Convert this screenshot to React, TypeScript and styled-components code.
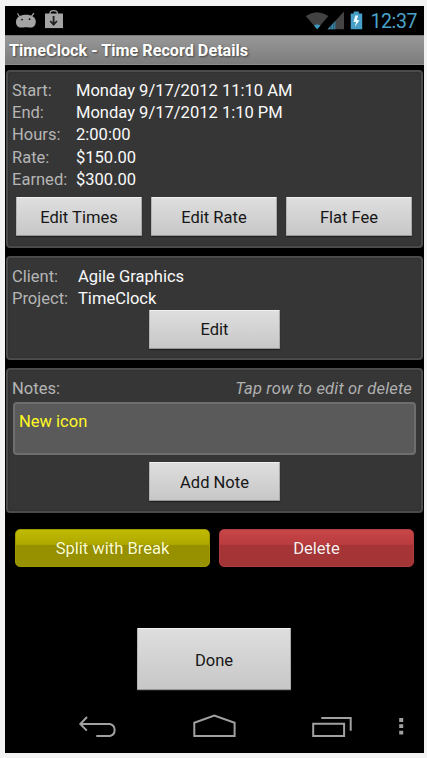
import React from "react";
import styled, { createGlobalStyle } from "styled-components";

const GlobalStyle = createGlobalStyle`
  * { box-sizing: border-box; }
  body { margin: 0; background: #f3f3f3; font-family: Roboto, "Liberation Sans", sans-serif; }
  button { font: inherit; border: 0; padding: 0; margin: 0; }
`;

const Page = styled.div`
  width: 427px;
  height: 758px;
  padding: 6px 3px 5px 5px;
  overflow: hidden;
`;

const Screen = styled.main`
  height: 747px;
  background: #000;
  display: flex;
  flex-direction: column;
  font-size: 16.55px;
  line-height: 22.2px;
`;

const StatusBar = styled.header`
  height: 29px;
  flex: none;
  display: flex;
  align-items: flex-start;
  justify-content: space-between;
  padding: 0 7px 0 10px;
`;

const Clock = styled.time`
  color: #4ba3c9;
  font-size: 19.5px;
  line-height: 31px;
  letter-spacing: -0.4px;
  margin-left: 7px;
`;

const StatusGroup = styled.div`
  display: flex;
  height: 29px;
`;

const TitleBar = styled.h1`
  height: 30px;
  flex: none;
  margin: 0;
  padding-left: 4px;
  font-size: 16.2px;
  line-height: 30px;
  font-weight: 700;
  color: #fff;
  text-shadow: 1px 1px 2px rgba(0, 0, 0, 0.5);
  background: linear-gradient(#989898, #7c7c7c);
  border-top: 1px solid #777;
  border-bottom: 1px solid #8c8c8c;
`;

const Card = styled.section<{ $h: number; $top: number }>`
  height: ${(p) => p.$h}px;
  flex: none;
  margin: ${(p) => p.$top}px 1px 0;
  border: 2px solid #4b4b4b;
  border-radius: 4px;
  background: #363636;
  box-shadow: inset 0 0 2px #292929;
`;

const Details = styled.dl<{ $label: number }>`
  margin: 0;
  padding: 8px 4px 0;
  display: grid;
  grid-template-columns: ${(p) => p.$label}px 1fr;
  grid-auto-rows: 22.2px;
`;

const Label = styled.dt`
  color: #b5b5b5;
`;

const Value = styled.dd`
  margin: 0;
  color: #fafafa;
  white-space: nowrap;
`;

const ButtonRow = styled.div<{ $top: number; $shift?: number }>`
  display: flex;
  justify-content: center;
  gap: 9px;
  padding-top: ${(p) => p.$top}px;
  padding-right: ${(p) => p.$shift ?? 0}px;
`;

const GreyButton = styled.button<{ $w: number; $h?: number; $drop?: number }>`
  width: ${(p) => p.$w}px;
  height: ${(p) => p.$h ?? 39}px;
  padding-top: ${(p) => p.$drop ?? 2}px;
  color: #171717;
  background: linear-gradient(#dedede, #c7c7c7);
  border: 1px solid #b4b4b4;
  border-top-color: #f1f1f1;
  border-right-color: #aaa;
  border-bottom-color: #969696;
  border-radius: 1px;
  box-shadow: 0 1px 1px #202020;
`;

const NotesHeader = styled.div`
  display: flex;
  justify-content: space-between;
  padding: 8px 9px 0 4px;
  color: #b5b5b5;
`;

const Hint = styled.em`
  color: #b0b0b0;
  letter-spacing: 0.18px;
`;

const NoteRow = styled.div`
  height: 53px;
  margin: 2px 5px 0;
  padding: 7px 4px;
  color: #fff926;
  background: #5a5a5a;
  border: 2px solid #6e6e6e;
  border-radius: 4px;
`;

const Actions = styled.div`
  display: flex;
  gap: 9px;
  padding: 16px 10px 0;
`;

const ActionButton = styled.button<{ $tone: "olive" | "red" }>`
  flex: 1;
  height: 38px;
  padding-top: 2px;
  border-radius: 5px;
  color: ${(p) => (p.$tone === "olive" ? "#ffffcc" : "#fff0f0")};
  text-shadow: 0 0 1px rgba(0, 0, 0, 0.25);
  background: ${(p) =>
    p.$tone === "olive"
      ? "linear-gradient(#c0ba00, #aea800 40%, #969000 43%, #989200)"
      : "linear-gradient(#c84648, #b93c3e 40%, #a63436 43%, #a33537)"};
  border: 1px solid ${(p) => (p.$tone === "olive" ? "#9f9900" : "#ae3b3d")};
`;

const DoneArea = styled.div`
  display: flex;
  justify-content: center;
  padding-top: 61px;
  padding-right: 1px;
`;

const NavBar = styled.nav`
  margin-top: auto;
  height: 52px;
  flex: none;
`;

const Icon = styled.svg`
  display: block;
  flex: none;
`;

function NotificationIcons() {
  return (
    <Icon width="50" height="29" viewBox="15 6 50 29" fill="#a4a4a4">
      <path d="M16 22.2C16 17 20.5 14.8 26 14.8s9.8 2.6 9.8 6.8c0 3.6-2 6-4.7 6-1.9 0-3-.4-4.8-.4-2 0-3.2.3-5.2.3-3 0-5.1-2.2-5.1-5.3Z" />
      <path d="m19.7 17-2-3.2M31.3 16.4l2.4-2.9" stroke="#a4a4a4" strokeWidth="1.2" fill="none" strokeLinecap="round" />
      <circle cx="22" cy="19.6" r="0.9" fill="#111" />
      <circle cx="29.6" cy="19.2" r="0.9" fill="#111" />
      <path d="M45 13.5h18v14.6H45z" />
      <path d="M50 14v-1c0-1.6 1.5-2.4 3.6-2.4s3.7.8 3.7 2.4v1" fill="none" stroke="#a4a4a4" strokeWidth="1.3" />
      <path d="M53.6 16v8m-3.3-3 3.3 3.7L57 21" fill="none" stroke="#222" strokeWidth="1.8" />
    </Icon>
  );
}

function SystemIcons() {
  return (
    <Icon width="58" height="29" viewBox="305 6 58 29">
      <path d="M305.7 15.9q11.3-7.2 22.7 0L317.2 29.3Z" fill="#424242" />
      <path d="M314 25.5q3.2-1.8 6.4 0l-3.2 3.8Z" fill="#3c9bc4" />
      <path d="m327.6 29.3 16.4-17.9v17.9Z" fill="#444" />
      <path d="m327.6 29.3 7.7-8.4v8.4Z" fill="#3c8db0" />
      <path d="M331 25v4.3M333.8 22v7.3" stroke="#183d4c" strokeWidth=".8" />
      <path d="M350.7 13.5h3v-2h5.2v2h3.3v15.8h-11.5Z" fill="#459fc6" />
      <path d="m355.2 15.5-1.6 6.4 2.5.1-1.4 5 4.8-6.7-2.7-.3 1.4-4.5Z" fill="#eefcff" />
    </Icon>
  );
}

function NavigationIcons() {
  return (
    <Icon width="419" height="52" viewBox="5 701 419 52" fill="none" stroke="#a1a1a1" strokeWidth="2">
      <path d="M80.5 724H110a6.2 6.2 0 0 1 0 12H96.3M87 717l-6.7 7 6.5 6.6" />
      <path d="M194.3 735.9v-13.1l20-7.2 20.3 7.2v13.1Z" />
      <path d="M313.2 723.7h30.9v12.2h-30.9Z" />
      <path d="M321.3 718h29.4v12.8" />
      <path d="M399.2 718h4v4h-4zM399.2 724.3h4v3.8h-4zM399.2 730.8h4v3.8h-4z" fill="#a1a1a1" stroke="none" />
    </Icon>
  );
}

const timeDetails = [
  ["Start:", "Monday 9/17/2012 11:10 AM"],
  ["End:", "Monday 9/17/2012 1:10 PM"],
  ["Hours:", "2:00:00"],
  ["Rate:", "$150.00"],
  ["Earned:", "$300.00"],
];

const projectDetails = [
  ["Client:", "Agile Graphics"],
  ["Project:", "TimeClock"],
];

function DetailList({ rows, label }: { rows: string[][]; label: number }) {
  return (
    <Details $label={label}>
      {rows.map(([name, value]) => (
        <React.Fragment key={name}>
          <Label>{name}</Label>
          <Value>{value}</Value>
        </React.Fragment>
      ))}
    </Details>
  );
}

export default function App() {
  return (
    <Page>
      <GlobalStyle />
      <Screen>
        <StatusBar>
          <NotificationIcons />
          <StatusGroup>
            <SystemIcons />
            <Clock>12:37</Clock>
          </StatusGroup>
        </StatusBar>
        <TitleBar>TimeClock - Time Record Details</TitleBar>
        <Card $h={178} $top={5}>
          <DetailList rows={timeDetails} label={64} />
          <ButtonRow $top={6.5} $shift={1}>
            <GreyButton $w={126}>Edit Times</GreyButton>
            <GreyButton $w={126}>Edit Rate</GreyButton>
            <GreyButton $w={126}>Flat Fee</GreyButton>
          </ButtonRow>
        </Card>
        <Card $h={104} $top={8}>
          <DetailList rows={projectDetails} label={66} />
          <ButtonRow $top={0}>
            <GreyButton $w={131} $drop={0}>Edit</GreyButton>
          </ButtonRow>
        </Card>
        <Card $h={145} $top={8}>
          <NotesHeader>
            <span>Notes:</span>
            <Hint>Tap row to edit or delete</Hint>
          </NotesHeader>
          <NoteRow>New icon</NoteRow>
          <ButtonRow $top={7}>
            <GreyButton $w={131}>Add Note</GreyButton>
          </ButtonRow>
        </Card>
        <Actions>
          <ActionButton $tone="olive">Split with Break</ActionButton>
          <ActionButton $tone="red">Delete</ActionButton>
        </Actions>
        <DoneArea>
          <GreyButton $w={154} $h={62} $drop={4}>Done</GreyButton>
        </DoneArea>
        <NavBar>
          <NavigationIcons />
        </NavBar>
      </Screen>
    </Page>
  );
}
